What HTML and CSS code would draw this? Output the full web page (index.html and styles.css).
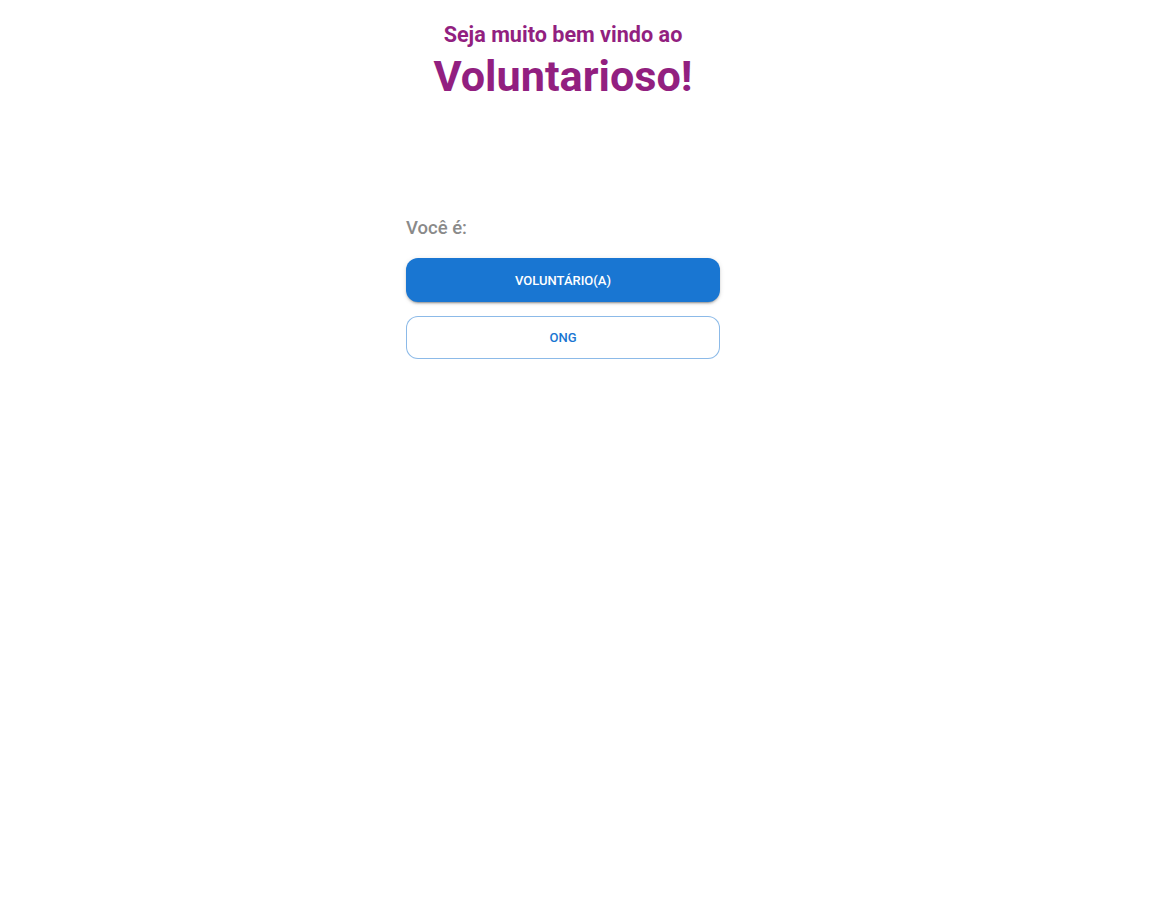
FILE: index.html
```html
<!DOCTYPE html>
<html lang="pt-BR">
<head>
<meta charset="utf-8">
<title>Voluntarioso</title>
<link rel="stylesheet" href="styles.css">
</head>
<body>
<main class="page">
  <header class="welcome">
    <h2 class="welcome-sub">Seja muito bem vindo ao</h2>
    <h1 class="welcome-title">Voluntarioso!</h1>
  </header>
  <section class="choice">
    <p class="choice-label">Você é:</p>
    <button class="btn btn-contained">Voluntário(a)</button>
    <button class="btn btn-outlined">ONG</button>
  </section>
</main>
</body>
</html>
```
FILE: styles.css
```css
* { box-sizing: border-box; }
html, body { margin: 0; padding: 0; background: #fff; }
body { font-family: Roboto, "Noto Sans", Arial, sans-serif; }
.page {
  display: flex;
  flex-direction: column;
  align-items: center;
  width: 100%;
  padding-right: 37px;
}
.welcome {
  display: flex;
  flex-direction: column;
  align-items: center;
  padding-top: 21px;
  color: #921f80;
}
.welcome-sub {
  margin: 0;
  font-size: 21.6px;
  font-weight: 700;
  line-height: 28px;
}
.welcome-title {
  margin: 0;
  font-size: 43.2px;
  font-weight: 700;
  line-height: 56px;
}
.choice {
  width: 314px;
  margin-top: 108px;
  display: flex;
  flex-direction: column;
}
.choice-label {
  margin: 0 0 15px 0;
  font-size: 18.5px;
  font-weight: 500;
  line-height: 30px;
  color: #8a8a8a;
}
.btn {
  font-family: Roboto, Arial, sans-serif;
  font-size: 13px;
  font-weight: 500;
  letter-spacing: 0;
  text-transform: uppercase;
  border-radius: 12px;
  cursor: pointer;
  width: 100%;
}
.btn-contained {
  height: 44px;
  background: #1976d2;
  color: #fff;
  border: none;
  box-shadow: 0 3px 1px -2px rgba(0,0,0,0.2), 0 2px 2px 0 rgba(0,0,0,0.14), 0 1px 5px 0 rgba(0,0,0,0.12);
}
.btn-outlined {
  margin-top: 14px;
  height: 43px;
  background: #fff;
  color: #1976d2;
  border: 1px solid rgba(25,118,210,0.5);
}
```
